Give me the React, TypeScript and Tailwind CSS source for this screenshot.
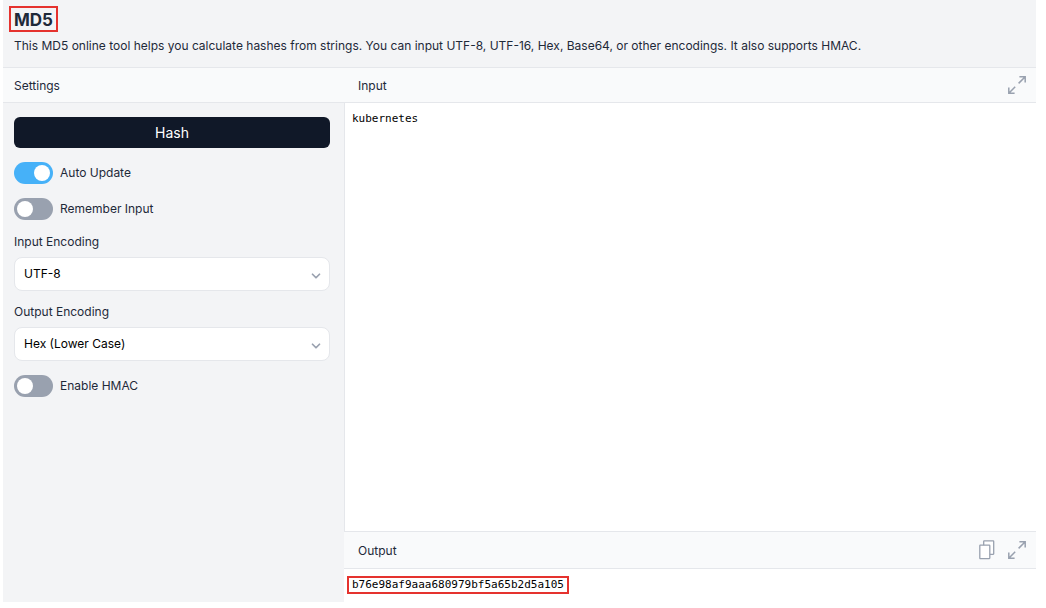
import { useState } from "react";
import type { ReactNode } from "react";
import { ChevronDown } from "lucide-react";

const DIGEST = "b76e98af9aaa680979bf5a65b2d5a105";

function ExpandIcon() {
    return (
        <svg width="20" height="20" viewBox="0 0 20 20" fill="none" stroke="currentColor" strokeWidth="1.5">
            <path d="M11.6 8.4l6.1-6.1M12.4 1.8h5.8v5.8M8.2 11.8l-5.9 5.9M1.8 12.4v5.8h5.8" />
        </svg>
    );
}

function CopyIcon() {
    return (
        <svg width="16" height="20" viewBox="0 0 16 20" fill="white" stroke="currentColor" strokeWidth="1.3" strokeLinejoin="round">
            <rect x="4.7" y="0.9" width="10" height="13.4" rx="0.5" />
            <rect x="0.8" y="5.2" width="10" height="13.4" rx="0.5" />
        </svg>
    );
}

interface PanelBarProps {
    title: string;
    className?: string;
    children?: ReactNode;
}

function PanelBar({ title, className = "", children }: PanelBarProps) {
    return (
        <div className={`flex shrink-0 items-center justify-between border-b border-gray-200 bg-gray-50 text-gray-800 ${className}`}>
            <h2 className="pt-0.5">{title}</h2>
            <div className="flex items-center gap-3 text-gray-400">{children}</div>
        </div>
    );
}

interface SwitchProps {
    label: string;
    checked: boolean;
    onChange: (value: boolean) => void;
}

function Switch({ label, checked, onChange }: SwitchProps) {
    return (
        <label className="flex cursor-pointer items-center gap-[7px]">
            <input
                type="checkbox"
                checked={checked}
                onChange={e => onChange(e.target.checked)}
                className="flex h-[22px] w-[39px] cursor-pointer appearance-none items-center rounded-full bg-gray-400 px-[3px] before:size-4 before:rounded-full before:bg-white checked:justify-end checked:bg-[#46b1f8]"
            />
            {label}
        </label>
    );
}

interface SelectFieldProps {
    id: string;
    label: string;
    options: string[];
}

function SelectField({ id, label, options }: SelectFieldProps) {
    return (
        <div className="flex flex-col gap-[7px]">
            <label htmlFor={id} className="leading-4">{label}</label>
            <div className="relative">
                <select id={id} className="h-[34px] w-full appearance-none rounded-lg border border-gray-200 bg-white px-[9px] text-black">
                    {options.map(option => <option key={option}>{option}</option>)}
                </select>
                <ChevronDown size={14} strokeWidth={3} className="pointer-events-none absolute top-3 right-[7px] text-gray-400" />
            </div>
        </div>
    );
}

export default function App() {
    const [autoUpdate, setAutoUpdate] = useState(true);
    const [remember, setRemember] = useState(false);
    const [hmac, setHmac] = useState(false);
    const [input, setInput] = useState("kubernetes");

    return (
        <div className="flex h-screen flex-col bg-white pr-2.5 pb-1.5 pl-[3px] font-['Inter',sans-serif] text-xs leading-5 text-gray-800">
            {/* Header */}
            <header className="flex flex-col items-start gap-1 border-b border-gray-200 bg-gray-100 px-1.5 pt-1.5 pb-[11px]">
                <h1 className="border-2 border-[#e5322e] px-[3px] pt-0.5 text-[17px] leading-5 font-bold">MD5</h1>
                <p className="px-[5px]">
                    This MD5 online tool helps you calculate hashes from strings. You can input UTF-8, UTF-16, Hex, Base64, or other encodings. It also supports HMAC.
                </p>
            </header>

            <div className="flex min-h-0 flex-1">
                {/* Settings */}
                <aside className="flex w-[341px] shrink-0 flex-col bg-gray-100">
                    <PanelBar title="Settings" className="h-[35px] px-[11px]" />
                    <div className="flex flex-col gap-3.5 py-3.5 pr-3.5 pl-[11px]">
                        <button type="button" className="h-[31px] rounded-md bg-gray-900 text-sm text-white">Hash</button>
                        <Switch label="Auto Update" checked={autoUpdate} onChange={setAutoUpdate} />
                        <Switch label="Remember Input" checked={remember} onChange={setRemember} />
                        <div className="flex flex-col gap-[13px]">
                            <SelectField id="input-encoding" label="Input Encoding" options={["UTF-8", "UTF-16", "Hex", "Base64"]} />
                            <SelectField id="output-encoding" label="Output Encoding" options={["Hex (Lower Case)", "Hex (Upper Case)", "Base64"]} />
                        </div>
                        <Switch label="Enable HMAC" checked={hmac} onChange={setHmac} />
                    </div>
                </aside>

                {/* Input / output */}
                <main className="flex min-w-0 flex-1 flex-col">
                    <PanelBar title="Input" className="h-[35px] pr-[9px] pl-3.5">
                        <button type="button" aria-label="Expand input"><ExpandIcon /></button>
                    </PanelBar>
                    <textarea
                        aria-label="Input"
                        value={input}
                        onChange={e => setInput(e.target.value)}
                        spellCheck={false}
                        className="min-h-0 flex-1 resize-none border-l border-gray-200 px-[7px] py-2 font-['DejaVu_Sans_Mono',monospace] text-[11px] leading-4 text-black outline-none"
                    />
                    <PanelBar title="Output" className="h-[38px] border-t pr-[9px] pl-3.5">
                        <button type="button" aria-label="Copy output"><CopyIcon /></button>
                        <button type="button" aria-label="Expand output"><ExpandIcon /></button>
                    </PanelBar>
                    <div className="flex h-[33px] items-start px-[3px] pt-[7px] font-['DejaVu_Sans_Mono',monospace] text-[11px] text-black">
                        <output className="border-2 border-[#e5322e] px-[3px] leading-[14px]">{DIGEST}</output>
                    </div>
                </main>
            </div>
        </div>
    );
}
